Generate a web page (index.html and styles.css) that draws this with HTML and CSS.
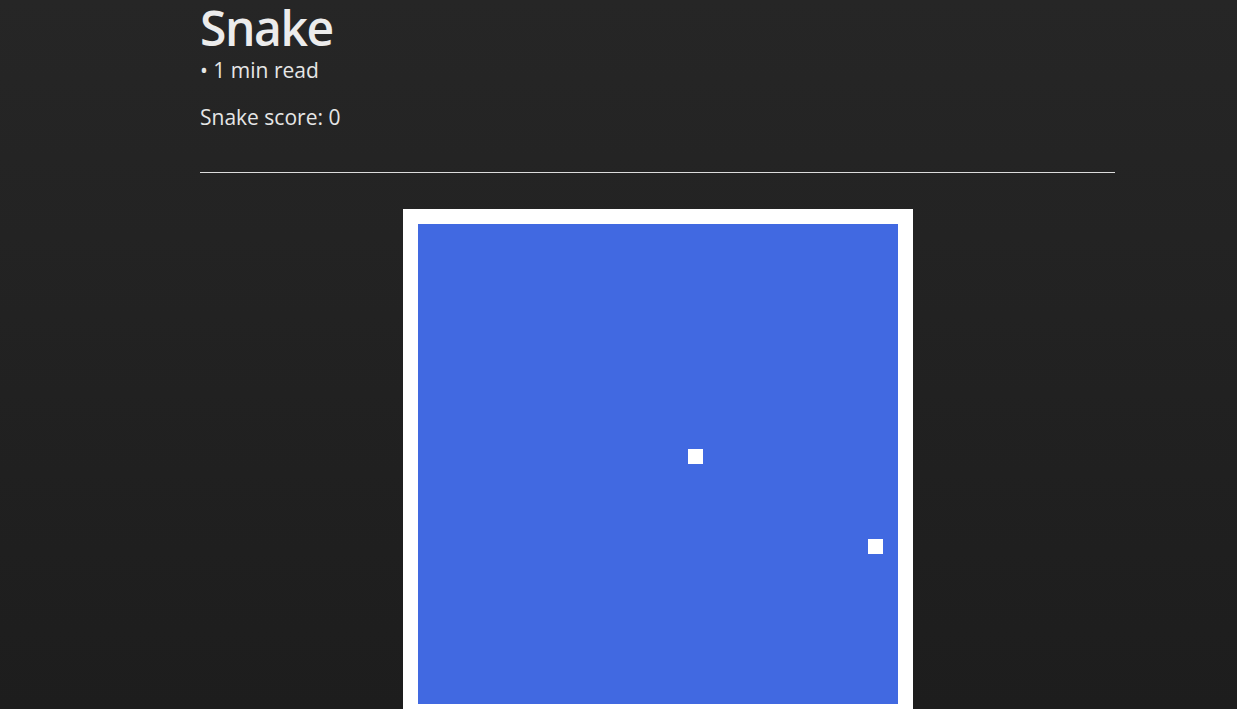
FILE: index.html
```html
<!DOCTYPE html>
<html>
<head>
<meta charset="utf-8">
<link rel="stylesheet" href="styles.css">
</head>
<body>
<main class="post">
  <header class="post-header">
    <h1 class="title">Snake</h1>
    <div class="meta">• 1 min read</div>
  </header>
  <p class="score">Snake score: 0</p>
  <hr class="rule">
  <div class="game">
    <div class="board">
      <div class="cell" style="left:270px;top:225px"></div>
      <div class="cell" style="left:450px;top:315px"></div>
    </div>
  </div>
</main>
</body>
</html>
```
FILE: styles.css
```css
html, body {
  margin: 0;
  padding: 0;
}
body {
  min-height: 100vh;
  background: linear-gradient(to bottom, #262626, #1d1d1d) fixed;
  color: #e6e6e6;
  font-family: "Open Sans", "Noto Sans", sans-serif;
}
.post {
  width: 915px;
  margin-left: 200px;
}
.title {
  margin: 0;
  font-size: 48px;
  font-weight: 600;
  line-height: 56px;
  letter-spacing: -1.4px;
  color: #ececec;
}
.meta {
  font-size: 21px;
  line-height: 28px;
}
.score {
  font-size: 21px;
  line-height: 28px;
  margin: 19px 0 0;
}
.rule {
  margin: 41px 0 0;
  border: 0;
  height: 1px;
  background: #dcdcdc;
}
.game {
  display: flex;
  justify-content: center;
  padding-top: 36px;
}
.board {
  position: relative;
  width: 480px;
  height: 480px;
  background: #4169e1;
  border: 15px solid #ffffff;
}
.cell {
  position: absolute;
  width: 15px;
  height: 15px;
  background: #ffffff;
}
```
